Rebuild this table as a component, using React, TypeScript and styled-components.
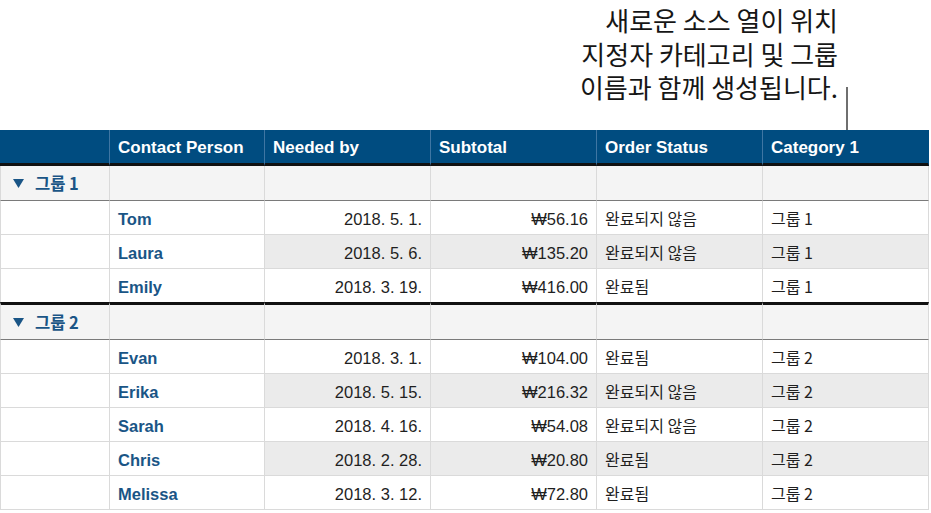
import styled, { createGlobalStyle } from "styled-components";

const GlobalStyle = createGlobalStyle`
  html, body {
    margin: 0;
    padding: 0;
    background: #ffffff;
  }
  body {
    font-family: "Liberation Sans", "Noto Sans CJK KR", sans-serif;
    color: #1f1f1f;
  }
`;

const Page = styled.div`
  width: 929px;
  display: flex;
  flex-direction: column;
`;

const CalloutArea = styled.div`
  height: 130px;
  display: flex;
  justify-content: flex-end;
  align-items: flex-start;
`;

const CalloutText = styled.p`
  margin: 3px 0 0;
  font-family: "Noto Sans CJK KR", "Liberation Sans", sans-serif;
  font-size: 26px;
  line-height: 33.5px;
  text-align: right;
  color: #161616;
`;

const Leader = styled.div`
  align-self: flex-end;
  width: 2px;
  height: 43px;
  margin: 0 81px 0 8px;
  background: #6f6f6f;
`;

const Table = styled.table`
  width: 929px;
  table-layout: fixed;
  border-collapse: separate;
  border-spacing: 0;
  font-size: 16.5px;
`;

const HeadCell = styled.th`
  background: #004c80;
  color: #ffffff;
  font-weight: bold;
  font-size: 17px;
  text-align: left;
  padding: 2px 8px 0;
  height: 31px;
  line-height: 31px;
  border-bottom: 3px solid #111;
  border-right: 1px solid #3f76a3;
  white-space: nowrap;
  &:last-child {
    border-right: 1px solid #004c80;
  }
`;

const GroupCell = styled.td<{ $top?: boolean }>`
  background: #f4f4f4;
  height: 33px;
  line-height: 33px;
  padding: 1px 8px 0;
  border-top: ${(p) => (p.$top ? "3px solid #111" : "none")};
  border-bottom: 1px solid #7a7a7a;
  border-right: 1px solid #dadada;
  &:first-child {
    border-left: 1px solid #dadada;
  }
`;

const GroupLabel = styled.span`
  display: flex;
  align-items: center;
  gap: 11px;
  padding-left: 4px;
  color: #1a5586;
  font-weight: bold;
  white-space: nowrap;
`;

const Cell = styled.td<{ $shade?: boolean; $align?: "left" | "right"; $last?: boolean }>`
  background: ${(p) => (p.$shade ? "#ebebeb" : "#ffffff")};
  text-align: ${(p) => p.$align ?? "left"};
  height: 30px;
  line-height: 30px;
  padding: 3px 8px 0;
  border-bottom: ${(p) => (p.$last ? "none" : "1px solid #dadada")};
  border-right: 1px solid #dadada;
  white-space: nowrap;
  color: #1f1f1f;
  &:first-child {
    border-left: 1px solid #dadada;
  }
`;

const NameCell = styled(Cell)`
  color: #1a5586;
  font-weight: bold;
`;

const Hangul = styled.span<{ $size?: number }>`
  font-family: "Noto Sans CJK KR", sans-serif;
  font-size: ${(p) => p.$size ?? 16}px;
  line-height: 1;
`;

const Tri = () => (
  <svg width="11" height="9" viewBox="0 0 11 9">
    <path d="M0 0H11L5.5 9Z" fill="#1a5586" />
  </svg>
);

type Row = { name: string; date: string; total: string; status: string };

const groups: { label: string; rows: Row[] }[] = [
  {
    label: "그룹 1",
    rows: [
      { name: "Tom", date: "2018. 5. 1.", total: "₩56.16", status: "완료되지 않음" },
      { name: "Laura", date: "2018. 5. 6.", total: "₩135.20", status: "완료되지 않음" },
      { name: "Emily", date: "2018. 3. 19.", total: "₩416.00", status: "완료됨" },
    ],
  },
  {
    label: "그룹 2",
    rows: [
      { name: "Evan", date: "2018. 3. 1.", total: "₩104.00", status: "완료됨" },
      { name: "Erika", date: "2018. 5. 15.", total: "₩216.32", status: "완료되지 않음" },
      { name: "Sarah", date: "2018. 4. 16.", total: "₩54.08", status: "완료되지 않음" },
      { name: "Chris", date: "2018. 2. 28.", total: "₩20.80", status: "완료됨" },
      { name: "Melissa", date: "2018. 3. 12.", total: "₩72.80", status: "완료됨" },
    ],
  },
];

const GroupBlock = ({ label, rows, top, last }: { label: string; rows: Row[]; top: boolean; last: boolean }) => (
  <>
    <tr>
      <GroupCell $top={top}>
        <GroupLabel>
          <Tri />
          <Hangul $size={16.5}>{label}</Hangul>
        </GroupLabel>
      </GroupCell>
      {[0, 1, 2, 3, 4].map((i) => (
        <GroupCell key={i} $top={top} />
      ))}
    </tr>
    {rows.map((r, i) => {
      const shade = i % 2 === 1;
      const isLast = last && i === rows.length - 1;
      return (
        <tr key={r.name}>
          <Cell $last={isLast} />
          <NameCell $last={isLast}>{r.name}</NameCell>
          <Cell $shade={shade} $align="right" $last={isLast}>{r.date}</Cell>
          <Cell $shade={shade} $align="right" $last={isLast}>{r.total}</Cell>
          <Cell $shade={shade} $last={isLast}>
            <Hangul>{r.status}</Hangul>
          </Cell>
          <Cell $shade={shade} $last={isLast}>
            <Hangul>{label}</Hangul>
          </Cell>
        </tr>
      );
    })}
  </>
);

export default function App() {
  return (
    <Page>
      <GlobalStyle />
      <CalloutArea>
        <CalloutText>
          새로운 소스 열이 위치
          <br />
          지정자 카테고리 및 그룹
          <br />
          이름과 함께 생성됩니다.
        </CalloutText>
        <Leader />
      </CalloutArea>
      <Table>
        <colgroup>
          <col style={{ width: 110 }} />
          <col style={{ width: 155 }} />
          <col style={{ width: 166 }} />
          <col style={{ width: 166 }} />
          <col style={{ width: 166 }} />
          <col style={{ width: 166 }} />
        </colgroup>
        <thead>
          <tr>
            <HeadCell />
            <HeadCell>Contact Person</HeadCell>
            <HeadCell>Needed by</HeadCell>
            <HeadCell>Subtotal</HeadCell>
            <HeadCell>Order Status</HeadCell>
            <HeadCell>Category 1</HeadCell>
          </tr>
        </thead>
        <tbody>
          {groups.map((g, gi) => (
            <GroupBlock key={g.label} label={g.label} rows={g.rows} top={gi > 0} last={gi < groups.length - 1} />
          ))}
        </tbody>
      </Table>
    </Page>
  );
}
